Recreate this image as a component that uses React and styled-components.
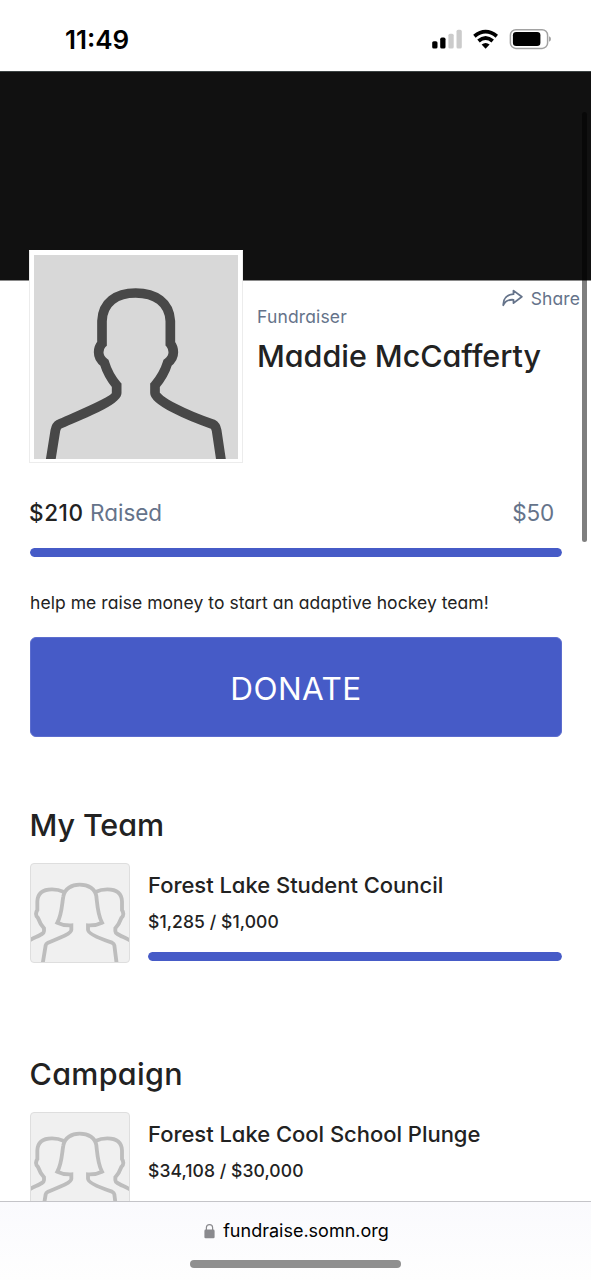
import React from "react";
import styled, { createGlobalStyle } from "styled-components";

const GlobalStyle = createGlobalStyle`
  * {
    box-sizing: border-box;
  }

  body {
    margin: 0;
    background: #fff;
    color: #222;
    font-family: Inter, "Liberation Sans", sans-serif;
    font-feature-settings: "cv11" 1;
  }

  h1, h2, h3, p {
    margin: 0;
    font-weight: 500;
    white-space: nowrap;
  }

  svg {
    display: block;
  }
`;

const Screen = styled.div`
  position: relative;
  display: flex;
  flex-direction: column;
  width: 591px;
  height: 1280px;
  overflow: hidden;
  background: #fff;
`;

const StatusBar = styled.header`
  display: flex;
  flex: none;
  justify-content: space-between;
  height: 71px;
  padding: 28px 40px 0 65px;
`;

const Time = styled.div`
  height: 24px;
  color: #000;
  font-size: 26px;
  font-weight: 600;
  line-height: 24px;
`;

const Content = styled.main`
  flex: 1;
  min-height: 0;
  overflow: hidden;
`;

const Banner = styled.div`
  height: 209px;
  border-top: 1px solid #3b4242;
  background: #111;
`;

const Profile = styled.section`
  display: flex;
  height: 183px;
  padding: 0 11px 0 29px;
  border-top: 1px solid #8a8a8a;
`;

const Avatar = styled.div`
  flex: none;
  width: 214px;
  height: 213px;
  margin-top: -31px;
  padding: 5px 5px 4px 5px;
  border: 1px solid #ececec;
  border-top-color: #fff;
  background: #fff;
  background-clip: padding-box;

  svg {
    width: 204px;
    height: 204px;
    margin: -1px 0 0 -0.7px;
  }
`;

const ProfileInfo = styled.div`
  flex: 1;
  padding-left: 14px;
`;

const ShareLink = styled.div`
  display: flex;
  justify-content: flex-end;
  gap: 8px;
  height: 26px;
  padding-top: 8px;
  color: #65738a;
  font-size: 17.5px;
  line-height: 20px;
  letter-spacing: 0.1px;
`;

const Role = styled.p`
  height: 20px;
  color: #65738a;
  font-size: 17.5px;
  font-weight: 400;
  line-height: 20px;
  letter-spacing: 0.15px;
`;

const Name = styled.h1`
  margin-top: 9px;
  font-size: 30.5px;
  line-height: 40px;
  letter-spacing: -0.04px;
`;

const Section = styled.section`
  padding: 0 29px 0 30px;
`;

const Totals = styled.div`
  display: flex;
  justify-content: space-between;
  height: 50px;
  margin-top: 35px;
  padding-right: 8px;
  color: #65738a;
  font-size: 22.5px;
  line-height: 30px;
`;

const Raised = styled.strong`
  margin-left: -1px;
  color: #222;
  font-weight: 500;
  letter-spacing: 0.6px;
`;

const Goal = styled.span`
  letter-spacing: -0.2px;
`;

const Track = styled.div`
  height: 9px;
  border-radius: 5px;
  background: #dfe3f5;
  overflow: hidden;
`;

const Fill = styled.div`
  width: 100%;
  height: 100%;
  border-radius: 5px;
  background: #465bc7;
`;

const Message = styled.p`
  height: 80px;
  padding-top: 36px;
  font-size: 17.5px;
  font-weight: 400;
  line-height: 20px;
  letter-spacing: 0.05px;
`;

const DonateButton = styled.button`
  display: block;
  width: 532px;
  height: 100px;
  padding: 2px 0 0;
  border: 1px solid #5c6dce;
  border-radius: 6px;
  background: #465bc7;
  color: #fff;
  font: inherit;
  font-size: 31.5px;
  letter-spacing: 0.4px;
`;

const Group = styled(Section)`
  height: 249px;
  padding-top: 68px;
`;

const GroupTitle = styled.h2`
  height: 58px;
  margin-left: -0.5px;
  font-size: 30.5px;
  line-height: 40px;
  letter-spacing: ${({ $tracking }) => $tracking || 0}px;
`;

const GroupRow = styled.div`
  display: flex;
  gap: 18px;
`;

const GroupImage = styled.div`
  flex: none;
  width: 100px;
  height: 100px;
  border: 1.5px solid #dedede;
  border-radius: 4px;
  background: #f0f0f0;
  overflow: hidden;

  svg {
    width: 100px;
    height: 100px;
    margin: -1px;
  }
`;

const GroupInfo = styled.div`
  flex: 1;
`;

const GroupName = styled.h3`
  height: 48px;
  padding-top: 8px;
  font-size: 22px;
  line-height: 28px;
  letter-spacing: -0.03px;
`;

const Amount = styled.p`
  height: 41px;
  padding-top: 1px;
  font-size: 17.5px;
  line-height: 20px;
  letter-spacing: 0.08px;
`;

const AddressBar = styled.footer`
  flex: none;
  height: 79px;
  border-top: 1px solid #c4c4c8;
  background: linear-gradient(#fafafd, #fefefe);
`;

const Address = styled.div`
  display: flex;
  justify-content: center;
  gap: 8px;
  height: 58px;
  padding: 18px 0 0 2px;
  color: #000;
  font-size: 18px;
  line-height: 22px;
  font-feature-settings: normal;
`;

const HomeIndicator = styled.div`
  width: 211px;
  height: 8px;
  margin: 0 auto;
  border-radius: 4px;
  background: #8f8f8f;
`;

const Scrollbar = styled.div`
  position: absolute;
  top: 112px;
  right: 4px;
  width: 5px;
  height: 430px;
  border-radius: 3px;
  background: rgba(0, 0, 0, 0.5);
`;

const StatusIcons = () => (
  <svg width="120" height="22" viewBox="431 28 120 22">
    <rect x="432.2" y="41.2" width="5.3" height="7.4" rx="1.6" />
    <rect x="440.2" y="37.6" width="5.3" height="11" rx="1.6" />
    <rect x="448.4" y="33.7" width="5.3" height="14.9" rx="1.6" fill="#cbcbcb" />
    <rect x="456.5" y="29.8" width="5.3" height="18.8" rx="1.6" fill="#cbcbcb" />
    <g transform="translate(3.1)" fill="none" stroke="#000" strokeWidth="3.8">
      <path d="M471.3 36.2 Q482.5 27.1 493.7 36.2" />
      <path d="M475.4 41 Q482.5 35 489.6 41" />
    </g>
    <path d="M485.6 48.7 L481.6 44.5 Q485.6 41.5 489.6 44.5 Z" />
    <rect x="510.4" y="29.7" width="37.2" height="18.7" rx="5.5" fill="none" stroke="#a2a2a2" strokeWidth="1.5" />
    <rect x="512.9" y="32" width="27.5" height="14" rx="3.3" />
    <path d="M549 36.2 Q551 37 551 39 T549 41.8 Z" fill="#a2a2a2" />
  </svg>
);

const PersonIcon = () => (
  <svg viewBox="43 44 612 612">
    <path fill="#d8d8d8" d="M43 44h612v612H43z" />
    <path
      fill="none"
      stroke="#484848"
      strokeWidth="29"
      d="M92 665 L107 571 Q110 556 118 552 C190 520 291 480 291 458 V435 C272 413 262 393 254 367 C244 360 237 350 237 336 C237 325 241 316 247 310 V242 C249 186 290 158 348 158 C407 158 449 186 452 242 V310 C457 316 461 325 461 336 C461 350 454 360 444 367 C436 393 425 413 406 435 V458 C406 480 500 525 580 552 Q588 556 591 571 L605 665"
    />
  </svg>
);

const sidePerson =
  "M28 422 C55 408 72 403 72 395 V386 C62 375 58 366 54 355 Q48 350 48 343 Q49 335 52 331 V305 C53 280 70 269 96 269 Q115 269 132 277";

const GroupIcon = () => (
  <svg viewBox="30 190 300 300" fill="none" stroke="#bdbdbd" strokeWidth="11.5">
    <path d={sidePerson} />
    <path d={sidePerson} transform="matrix(-1 0 0 1 358 0)" />
    <path d="M68 492 L77 437 Q78 432 84 429 C110 418 154 403 154 390 V377 Q130 378 112 369 C126 345 126 310 130 290 C134 267 155 255 179 255 C205 255 226 267 229 290 C232 315 233 345 246 369 Q228 378 204 377 V390 C204 403 250 420 276 429 Q282 432 283 437 L290 492" />
  </svg>
);

const ShareIcon = () => (
  <svg width="21" height="18" viewBox="0 0 21 18" fill="none" stroke="currentColor" strokeWidth="1.8" strokeLinejoin="round">
    <path d="M11.5 1.6 L19.8 7.8 L11.5 14.1 V10.8 C6.5 10.4 3.2 12.2 1.3 16.2 C1 9.6 5 5.5 11.5 5.2 Z" />
  </svg>
);

const LockIcon = () => (
  <svg width="11" height="22" viewBox="0 0 11 22">
    <path d="M2.4 11 V7.5 Q2.4 4.6 5.5 4.6 T8.6 7.5 V11" fill="none" stroke="#8a8a8e" strokeWidth="1.2" />
    <rect x="0.4" y="9.6" width="10.2" height="8.6" rx="1.3" fill="#8a8a8e" />
  </svg>
);

const Progress = () => (
  <Track>
    <Fill />
  </Track>
);

const GroupCard = ({ title, tracking, name, amount }) => (
  <Group>
    <GroupTitle $tracking={tracking}>{title}</GroupTitle>
    <GroupRow>
      <GroupImage>
        <GroupIcon />
      </GroupImage>
      <GroupInfo>
        <GroupName>{name}</GroupName>
        <Amount>{amount}</Amount>
        <Progress />
      </GroupInfo>
    </GroupRow>
  </Group>
);

export default () => {
  return (
    <Screen>
      <GlobalStyle />
      <StatusBar>
        <Time>11:49</Time>
        <StatusIcons />
      </StatusBar>
      <Content>
        <Banner />
        <Profile>
          <Avatar>
            <PersonIcon />
          </Avatar>
          <ProfileInfo>
            <ShareLink>
              <ShareIcon />
              <span>Share</span>
            </ShareLink>
            <Role>Fundraiser</Role>
            <Name>Maddie McCafferty</Name>
          </ProfileInfo>
        </Profile>
        <Section>
          <Totals>
            <span>
              <Raised>$210</Raised> Raised
            </span>
            <Goal>$50</Goal>
          </Totals>
          <Progress />
          <Message>help me raise money to start an adaptive hockey team!</Message>
          <DonateButton>DONATE</DonateButton>
        </Section>
        <GroupCard
          title="My Team"
          tracking={-0.1}
          name="Forest Lake Student Council"
          amount="$1,285 / $1,000"
        />
        <GroupCard
          title="Campaign"
          tracking={0.3}
          name="Forest Lake Cool School Plunge"
          amount="$34,108 / $30,000"
        />
      </Content>
      <AddressBar>
        <Address>
          <LockIcon />
          <span>fundraise.somn.org</span>
        </Address>
        <HomeIndicator />
      </AddressBar>
      <Scrollbar />
    </Screen>
  );
};
